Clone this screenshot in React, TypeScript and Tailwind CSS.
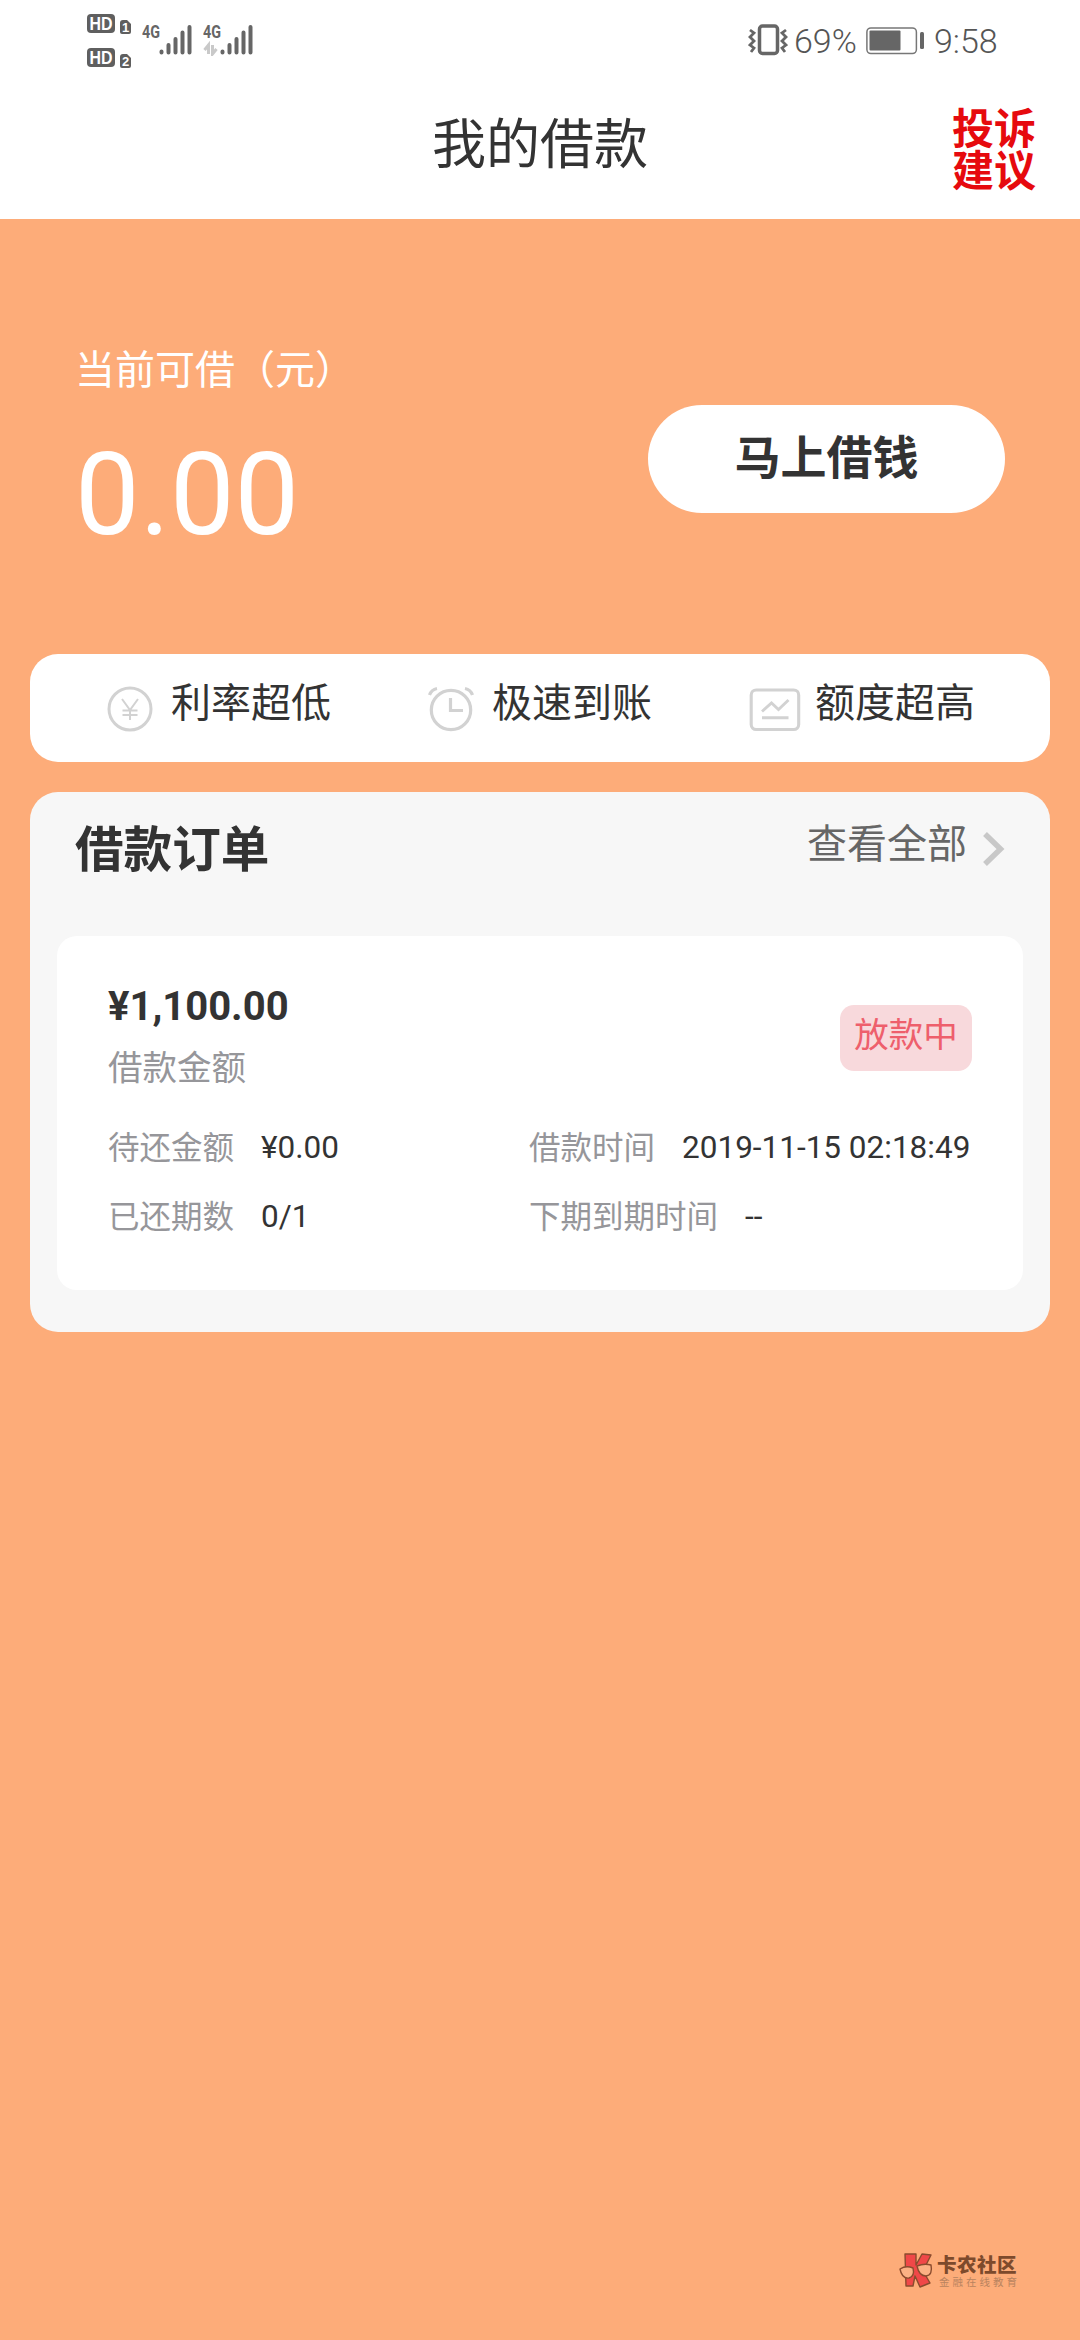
import React from "react";

const CJK = "font-['Noto_Sans_CJK_SC',sans-serif]";
const ROBOTO = "font-['Roboto','Noto_Sans_CJK_SC',sans-serif]";

function HdBadge({ sim }: { sim: string }) {
  return (
    <svg width="46" height="22" viewBox="0 0 46 22" className="block">
      <rect x="0" y="1" width="28" height="19" rx="4" fill="#5f5f5f" />
      <text x="14" y="17" textAnchor="middle" fontFamily="Liberation Sans" fontWeight="700" fontSize="17.5" textLength="23" lengthAdjust="spacingAndGlyphs" fill="#fff">HD</text>
      <path d="M33 10q0-3 3-3h4l4 4v8q0 2-2 2h-7q-2 0-2-2z" fill="#5f5f5f" />
      <text x="38.500" y="18.500" textAnchor="middle" fontFamily="Liberation Sans" fontWeight="700" fontSize="13" fill="#fff">{sim}</text>
    </svg>
  );
}

function Signal({ data }: { data?: boolean }) {
  return (
    <svg width="52" height="34" viewBox="0 0 52 34" className="block">
      <text x="0" y="15.500" fontFamily="Roboto" fontWeight="700" fontSize="18" textLength="18" lengthAdjust="spacingAndGlyphs" fill="#666">4G</text>
      {data && (
        <g stroke="#c9c9c9" strokeWidth="3" fill="none">
          <path d="M5.500 32V23l-4 5M9.500 23v9l4-5" />
        </g>
      )}
      <g stroke="#666" strokeWidth="4" strokeLinecap="round">
        <path d="M19.500 29.500v1M26.500 23v7.500M33.500 17v13.500M40.500 10.500v20M47.500 5v25.500" />
      </g>
    </svg>
  );
}

function Vibrate() {
  return (
    <svg width="40" height="32" viewBox="0 0 40 32" className="block" fill="none" stroke="#666">
      <rect x="11.500" y="2" width="18" height="27.500" rx="3" strokeWidth="3.500" />
      <path d="M2 6l4 3-4 4 4 4-4 4 4 3-3 4M38 6l-4 3 4 4-4 4 4 4-4 3 3 4" strokeWidth="2.800" />
    </svg>
  );
}

function Battery() {
  return (
    <svg width="58" height="28" viewBox="0 0 58 28" className="block">
      <rect x="0.900" y="0.900" width="49.500" height="25.700" rx="4" fill="none" stroke="#777" strokeWidth="1.500" />
      <rect x="3.500" y="3.500" width="31" height="20" rx="1" fill="#666" />
      <rect x="54" y="5" width="4" height="17" rx="1.500" fill="#666" />
    </svg>
  );
}

function YenIcon() {
  return (
    <svg width="46" height="46" viewBox="0 0 46 46" className="block" fill="none" stroke="#d2d2d2">
      <circle cx="23" cy="23" r="21" strokeWidth="3" />
      <path d="M15 13l8 11 8-11M23 24v10M15.500 24.500h15M15.500 29h15" strokeWidth="2" />
    </svg>
  );
}

function ClockIcon() {
  return (
    <svg width="46" height="46" viewBox="0 0 46 46" className="block" fill="none" stroke="#d2d2d2" strokeWidth="3.200">
      <circle cx="23" cy="24" r="19.700" />
      <path d="M1.500 9q2-5.500 7.500-6.500M44.500 9q-2-5.500-7.500-6.500M22.500 12v12.500H35" />
    </svg>
  );
}

function ChartIcon() {
  return (
    <svg width="52" height="46" viewBox="0 0 52 46" className="block" fill="none" stroke="#d2d2d2" strokeWidth="3.100">
      <rect x="2.200" y="4" width="47.500" height="39.500" rx="5" />
      <path d="M13 25.500l9.500-8.500 7 6.500L39.500 14M13 31.800h26.500" strokeWidth="2.900" />
    </svg>
  );
}

function Feature({ icon, label, gap }: { icon: React.ReactNode; label: string; gap: string }) {
  return (
    <div className={`flex ${gap}`}>
      <div className="pt-[32px]">{icon}</div>
      <span className="pt-[16px] text-[40px] leading-[60px] text-[#333]">{label}</span>
    </div>
  );
}

function Field({ label, value }: { label: string; value: string }) {
  return (
    <div className="flex gap-[27px] whitespace-nowrap text-[31.500px] leading-[48px]">
      <span className="text-[#96969a]">{label}</span>
      <span className={`${ROBOTO} pt-[3px] text-[#333]`}>{value}</span>
    </div>
  );
}

function Watermark() {
  return (
    <div className="flex items-start gap-[2px]">
      <svg width="36" height="38" viewBox="0 0 36 38" className="block" stroke="#8a4b2e" strokeLinejoin="round">
        <path d="M6 2h11v11L23 2l9 1-8 16 7 12-10 4-5-11-2 10H7z" fill="#f04848" strokeWidth="1.400" />
        <path d="M1 17q6-4 13-1 2 8-4 10Q3 27 1 17zM18 14q7-3 14-1 2 10-5 11-7 0-9-10z" fill="#fbb184" strokeWidth="1.400" />
      </svg>
      <div className="flex flex-col">
        <span className="text-[19.500px] leading-[24px] font-black tracking-[0.500px] text-[#7d4a2c]">卡农社区</span>
        <span className="pl-[2px] text-[10.500px] leading-[12px] tracking-[3px] text-[#b9835f]">金融在线教育</span>
      </div>
    </div>
  );
}

export default function App() {
  return (
    <div className={`${CJK} flex h-[2340px] w-[1080px] flex-col bg-[#fdac79]`}>
      <header className="flex h-[219px] flex-col bg-white">
        <div className="flex h-[80px] justify-between pr-[80px] pl-[87px]">
          <div className="flex">
            <div className="flex flex-col gap-[12px] pt-[13px]">
              <HdBadge sim="1" />
              <HdBadge sim="2" />
            </div>
            <div className="flex gap-[9px] pt-[22px] pl-[9px]">
              <Signal />
              <Signal data />
            </div>
          </div>
          <div className="flex pt-[21px] font-['Roboto',sans-serif] text-[34px] leading-[40px] font-light text-[#555]">
            <div className="pt-[3px]"><Vibrate /></div>
            <span className="w-[78px] pl-[6px]">69%</span>
            <div className="pt-[6px]"><Battery /></div>
            <span className="w-[76px] pl-[10px]">9:58</span>
          </div>
        </div>
        <div className="grid grid-cols-[1fr_auto_1fr] items-start">
          <h1 className="col-start-2 pt-[25px] text-[54px] leading-[72px] font-normal text-[#333]">我的借款</h1>
          <div className="mt-[25px] mr-[44px] w-[84px] justify-self-end text-[42px] leading-[42px] font-bold text-[#e60a0e]">投诉建议</div>
        </div>
      </header>

      <section className="flex h-[435px] justify-between pr-[75px] pl-[75px]">
        <div className="flex flex-col pt-[118px] text-white">
          <span className="text-[40px] leading-[60px]">当前可借（元）</span>
          <span className="pt-[30px] font-['Roboto',sans-serif] text-[115px] leading-[136px]">0.00</span>
        </div>
        <button className="mt-[186px] flex h-[108px] w-[357px] justify-center rounded-full bg-white pt-[15px] text-[46px] leading-[68px] font-bold text-[#333]">
          马上借钱
        </button>
      </section>

      <section className="mx-[30px] flex h-[108px] justify-between rounded-[28px] bg-white pr-[75px] pl-[77px]">
        <Feature icon={<YenIcon />} label="利率超低" gap="gap-[18px]" />
        <Feature icon={<ClockIcon />} label="极速到账" gap="gap-[18px]" />
        <Feature icon={<ChartIcon />} label="额度超高" gap="gap-[14px]" />
      </section>

      <section className="mx-[30px] mt-[30px] h-[540px] rounded-[28px] bg-[#f7f7f7] px-[27px]">
        <div className="flex h-[144px] justify-between pl-[18px]">
          <h2 className="pt-[18px] text-[48.600px] leading-[72px] font-bold text-[#333]">借款订单</h2>
          <div className="flex pr-[17px] text-[#666]">
            <span className="pt-[19px] text-[40px] leading-[60px]">查看全部</span>
            <svg width="24" height="36" viewBox="0 0 24 36" className="mt-[39px] ml-[15px] block" fill="none" stroke="#c8c8c8" strokeWidth="5.500">
              <path d="M3 3l15.500 15L3 33" />
            </svg>
          </div>
        </div>
        <article className="h-[354px] rounded-[20px] bg-white pr-[51px] pl-[51px]">
          <div className="flex justify-between">
            <div className="flex flex-col pt-[47px]">
              <span className="font-['Roboto',sans-serif] text-[40px] leading-[48px] font-bold text-[#333]">¥1,100.00</span>
              <span className="pt-[9px] text-[34.500px] leading-[50px] text-[#96969a]">借款金额</span>
            </div>
            <span className="mt-[69px] h-[66px] w-[132px] rounded-[14px] bg-[#f8d9dc] text-center text-[34.500px] leading-[55px] text-[#ee5f6c]">放款中</span>
          </div>
          <div className="mt-[31px] grid grid-cols-[421px_1fr] gap-y-[18px]">
            <Field label="待还金额" value="¥0.00" />
            <Field label="借款时间" value="2019-11-15 02:18:49" />
            <Field label="已还期数" value="0/1" />
            <Field label="下期到期时间" value="--" />
          </div>
        </article>
      </section>

      <footer className="mt-auto flex justify-end pr-[60px] pb-[50px]">
        <Watermark />
      </footer>
    </div>
  );
}
